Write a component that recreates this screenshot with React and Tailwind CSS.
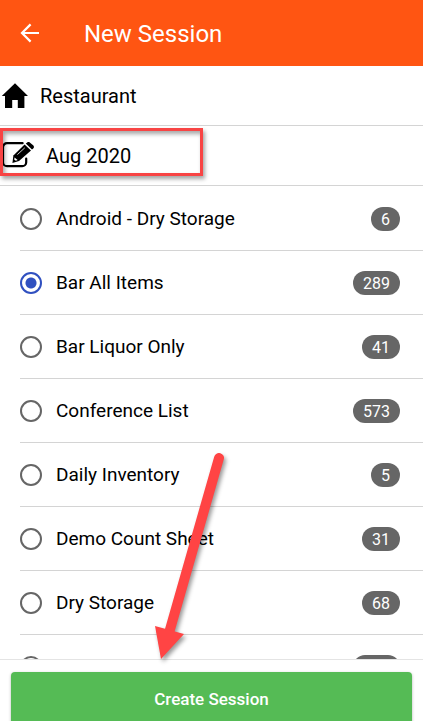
const countSheets = [
  { id: 'android-dry', name: 'Android - Dry Storage', items: 6 },
  { id: 'bar-all', name: 'Bar All Items', items: 289 },
  { id: 'bar-liquor', name: 'Bar Liquor Only', items: 41 },
  { id: 'conference', name: 'Conference List', items: 573 },
  { id: 'daily', name: 'Daily Inventory', items: 5 },
  { id: 'demo', name: 'Demo Count Sheet', items: 31 },
  { id: 'dry', name: 'Dry Storage', items: 68 },
  { id: 'pending', name: '', items: null },
]

function BackIcon() {
  return (
    <svg viewBox="0 0 20 20" className="size-5" fill="none" stroke="currentColor" strokeWidth="2.2" aria-hidden="true">
      <path d="M19 10H2.5M10.6 1.4L2 10l8.6 8.6" />
    </svg>
  )
}

function HomeIcon() {
  return (
    <svg viewBox="0 0 28 26" className="h-[26px] w-7" fill="currentColor" aria-hidden="true">
      <path d="M15 0.2L28 13h-3.6v12h-6.6v-8h-5.6v8H5V13H1.8z" />
    </svg>
  )
}

function EditIcon() {
  return (
    <svg viewBox="0 0 34 28" className="h-7 w-[34px]" aria-hidden="true">
      <path
        d="M22.6 1.2H7a4 4 0 0 0-4 4v15a4 4 0 0 0 4 4h15.2a4 4 0 0 0 4-4v-3.6"
        fill="none"
        stroke="currentColor"
        strokeWidth="2.2"
        strokeLinecap="round"
      />
      <path d="M24.6 2.6l6.4 5.8L19 19l-6.6 2 1-7.4z" fill="currentColor" />
      <path d="M25.8 1.6l1.4-1.2a2 2 0 0 1 2.6 0l3.6 3.2a2 2 0 0 1 0 2.6l-1.4 1.2z" fill="currentColor" />
      <path d="M17.4 12.6l7.4-6.8" stroke="#fff" strokeWidth="0.8" />
      <path d="M14.6 15.4l3 2.6-1.8.8-1.6-1.4z" fill="#fff" />
    </svg>
  )
}

function SheetRow({ sheet }) {
  return (
    <li className="border-t border-[#d4d4d4] first:border-t-0">
      <label className="flex h-[63px] items-center pr-[23px]">
        <input
          type="radio"
          name="sheet"
          defaultChecked={sheet.id === 'bar-all'}
          className="size-[22px] shrink-0 appearance-none rounded-full border-2 border-[#666] checked:border-[#3050c0] checked:bg-[radial-gradient(circle,#3050c0_5px,transparent_6px)]"
        />
        <span className="ml-[14px] flex-1 pt-0.5 text-[19px]">{sheet.name}</span>
        {sheet.items === null ? (
          <span className="h-6 w-[47px] rounded-full bg-[#666]" />
        ) : (
          <span className="h-6 rounded-full bg-[#666] px-[10px] text-base leading-[25px] text-white">{sheet.items}</span>
        )}
      </label>
    </li>
  )
}

function PointerArrow() {
  return (
    <svg
      viewBox="0 0 80 216"
      className="pointer-events-none absolute top-[449px] left-[150px] h-[216px] w-20 drop-shadow-[2px_3px_2px_rgba(0,0,0,0.4)]"
      aria-hidden="true"
    >
      <path d="M69 9L19 184" stroke="#ff4444" strokeWidth="10" strokeLinecap="round" />
      <path d="M5 177l29 8-23 25z" fill="#ff4444" />
    </svg>
  )
}

export default function App() {
  return (
    <div className="relative flex h-screen flex-col overflow-hidden bg-white font-['Roboto',sans-serif] text-black">
      <header className="flex h-[66px] shrink-0 items-center bg-[#ff5512] pl-5 text-white">
        <button type="button" aria-label="Back">
          <BackIcon />
        </button>
        <h1 className="ml-11 pt-0.5 text-2xl">New Session</h1>
      </header>

      <div className="flex h-[60px] shrink-0 items-center border-b border-[#d4d4d4]">
        <HomeIcon />
        <span className="ml-3 text-xl">Restaurant</span>
      </div>

      <div className="relative flex h-[60px] shrink-0 items-center border-b border-[#d4d4d4]">
        <EditIcon />
        <span className="ml-3 text-xl">Aug 2020</span>
        <div className="pointer-events-none absolute top-0.5 left-0 h-12 w-[203px] border-3 border-[#f84444] shadow-[2px_3px_4px_rgba(0,0,0,0.35),inset_2px_3px_4px_rgba(0,0,0,0.35)]" />
      </div>

      <ul className="min-h-0 flex-1 overflow-hidden pt-px pl-5">
        {countSheets.map((sheet) => (
          <SheetRow key={sheet.id} sheet={sheet} />
        ))}
      </ul>

      <footer className="h-[62px] shrink-0 overflow-hidden border-t border-[#e4e4e4] px-[11px] pt-3">
        <button
          type="button"
          className="h-14 w-full rounded-sm bg-[#55bb55] text-[17px] font-medium text-white shadow-[0_1px_3px_rgba(0,0,0,0.3)]"
        >
          Create Session
        </button>
      </footer>

      <PointerArrow />
    </div>
  )
}
